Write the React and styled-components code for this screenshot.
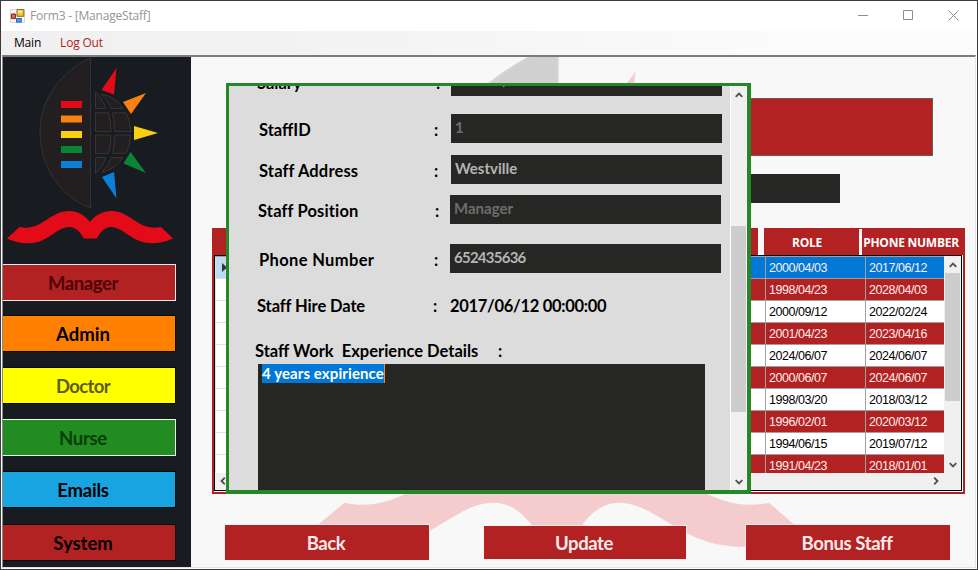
import React from "react";
import styled, { createGlobalStyle, css } from "styled-components";

const GlobalStyle = createGlobalStyle`
  * { box-sizing: border-box; }
  body { margin: 0; overflow: hidden; background: #3a3a3c; }
`;

const humanist = `Lato, "Open Sans", sans-serif`;

const Window = styled.div`
  width: 978px;
  height: 570px;
  display: flex;
  flex-direction: column;
  background: #fff;
  border: 1px solid #3a3a3c;
  font-family: ${humanist};
  overflow: hidden;
`;

const TitleBar = styled.header`
  height: 30px;
  flex: none;
  display: flex;
  align-items: center;
  padding-left: 9px;
  background: #fff;
`;

const TitleText = styled.span`
  margin-left: 5px;
  font: 12px/16px "Open Sans", sans-serif;
  letter-spacing: -0.2px;
  color: #959595;
  flex: 1;
`;

const Controls = styled.div`
  display: flex;
  gap: 35px;
  margin-right: 18px;
  margin-top: -1px;
`;

const MenuBar = styled.nav`
  height: 24px;
  flex: none;
  display: flex;
  align-items: center;
  gap: 19px;
  padding-left: 13px;
  background: linear-gradient(90deg, #f0f0f0 0%, #f3f3f3 35%, #fbfbfb 80%);
`;

const MenuItem = styled.span`
  font: 12px/16px "Open Sans", sans-serif;
  letter-spacing: -0.2px;
  color: ${(p) => p.$color || "#000"};
`;

const Body = styled.div`
  flex: 1;
  min-height: 0;
  display: flex;
  margin: 0 1px 1px;
  border: 1px solid #e3e3e3;
  border-top: 2px solid #7c7c7c;
  border-left-color: #8a8a8a;
`;

const Sidebar = styled.aside`
  width: 188px;
  flex: none;
  display: flex;
  flex-direction: column;
  background: #181b20;
`;

const SideLogo = styled.svg`
  flex: none;
  width: 188px;
  height: 207px;
`;

const SideButton = styled.button`
  flex: none;
  width: 173px;
  height: 37px;
  margin: 0 0 ${(p) => p.$gap || 15}px;
  padding: 0 12px 0 0;
  border: 1px solid ${(p) => p.$edge || "#08080a"};
  border-left: 0;
  background: ${(p) => p.$bg};
  color: ${(p) => p.$fg || "#000"};
  font: bold 18.5px/34px ${humanist};
  letter-spacing: ${(p) => p.$track || "0"};
`;

const Main = styled.main`
  position: relative;
  flex: 1;
  min-width: 0;
  display: flex;
  flex-direction: column;
  background: #f8f8f8;
  overflow: hidden;
`;

const Watermark = styled.svg`
  position: absolute;
  left: 104px;
  top: -15px;
  width: 564px;
  height: 561px;
  opacity: 0.18;
`;

const Banner = styled.div`
  position: relative;
  flex: none;
  width: 633px;
  height: 58px;
  margin: 41px 0 0 109px;
  background: #b22222;
  border: 1px solid #6b5b5b;
`;

const SearchBox = styled.div`
  position: relative;
  flex: none;
  width: 390px;
  height: 29px;
  margin: 18px 0 0 259px;
  background: #262624;
`;

const GridFrame = styled.section`
  position: relative;
  flex: none;
  display: flex;
  flex-direction: column;
  width: 753px;
  height: 266px;
  margin: 25px 0 0 21px;
`;

const HeaderRow = styled.div`
  height: 27px;
  flex: none;
  display: grid;
  grid-template-columns: 546px 6px 95px 3px 103px;
  background: #f8f8f8;
`;

const HeaderCell = styled.div`
  background: #b22222;
  color: #fff;
  text-align: center;
  padding-right: ${(p) => p.$inset || 0}px;
  font: bold 12px/29px "Open Sans", sans-serif;
  letter-spacing: -0.25px;
  white-space: nowrap;
`;

const HeaderGap = styled.div`
  border-top: ${(p) => (p.$capped ? "1px solid #b22222" : "0")};
  background: #f8f8f8;
`;

const GridBorder = styled.div`
  flex: 1;
  min-height: 0;
  border: 2px solid #b22222;
  border-top: 0;
  padding: 0 1px 1px 0;
  background: #fff;
`;

const GridBox = styled.div`
  height: 236px;
  display: flex;
  flex-direction: column;
  border: 1px solid #000;
  background: #f0f0f0;
`;

const GridTop = styled.div`
  height: 217px;
  flex: none;
  display: flex;
`;

const Rows = styled.div`
  flex: 1;
  overflow: hidden;
  border-top: 1px solid #a0a0a0;
  background: #fff;
`;

const Row = styled.div`
  height: 22px;
  display: grid;
  grid-template-columns: 30px 521px 100px 1fr;
  background: ${(p) => p.$bg};
  color: ${(p) => p.$fg};
`;

const Cell = styled.div`
  border-right: 1px solid #a0a0a0;
  border-bottom: 1px solid #a0a0a0;
  padding-left: 3px;
  font: 12.5px/23px "Liberation Sans", Arial, sans-serif;
  height: 22px;
  letter-spacing: -0.45px;
  &:last-child { border-right: 0; }
`;

const RowHead = styled.div`
  display: flex;
  align-items: center;
  padding-left: 6px;
  border-left: 1px solid #e0e0e0;
  border-bottom: 1px solid #e0e0e0;
  background: ${(p) => (p.$active ? "#bcdcf4" : "#fff")};
`;

const scrollTrack = css`
  background: #f0f0f0;
  display: flex;
  align-items: center;
`;

const GridScroll = styled.div`
  ${scrollTrack}
  flex-direction: column;
  width: 17px;
  padding: 6px 1px 5px 1px;
`;

const GridHScroll = styled.div`
  ${scrollTrack}
  flex: 1;
  justify-content: space-between;
  padding: 0 21px 1px 4px;
`;

const Thumb = styled.div`
  width: 15px;
  height: ${(p) => p.$h}px;
  margin-top: ${(p) => p.$top}px;
  margin-bottom: auto;
  background: #cdcdcd;
`;

const Actions = styled.footer`
  position: relative;
  display: flex;
  align-items: center;
  margin: 31px 0 0 34px;
`;

const ActionButton = styled.button`
  width: ${(p) => p.$w}px;
  height: ${(p) => p.$h}px;
  margin-right: ${(p) => p.$gap || 0}px;
  padding: 0 2px 0 0;
  border: 0;
  outline: 1px solid rgba(240, 240, 244, 0.8);
  background: #b22222;
  color: #faeaea;
  font: bold 18.5px/34px ${humanist};
  letter-spacing: -0.4px;
`;

const DetailPanel = styled.section`
  position: absolute;
  left: 35px;
  top: 26px;
  width: 525px;
  height: 411px;
  display: flex;
  border: 3px solid #268726;
  border-right-width: 4px;
  border-bottom-width: 4px;
  background: #dcdcdc;
  overflow: hidden;
`;

const Details = styled.div`
  flex: 1;
  height: 404px;
  overflow: hidden;
`;

const Field = styled.div`
  display: flex;
  align-items: center;
  height: 29px;
  margin: ${(p) => p.$top}px 0 0 ${(p) => p.$left}px;
`;

const fieldText = css`
  padding-top: 3px;
  font: bold 16.5px/20px ${humanist};
  letter-spacing: ${(p) => p.$track || "0"};
  white-space: pre;
  color: #000;
`;

const Label = styled.label`
  ${fieldText}
  width: ${(p) => p.$w}px;
`;

const Colon = styled.span`
  ${fieldText}
  width: ${(p) => p.$w || 16}px;
`;

const PlainValue = styled.span`
  ${fieldText}
`;

const Value = styled.div`
  width: 271px;
  height: 29px;
  padding-left: 4px;
  background: #262624;
  color: ${(p) => (p.$disabled ? "#6d6d6d" : "#b4b4b4")};
  font: bold 15px/${(p) => p.$line || 27}px ${humanist};
  letter-spacing: ${(p) => p.$track || "0"};
`;

const Notes = styled.div`
  width: 447px;
  height: 126px;
  margin-left: 29px;
  padding-left: 4px;
  background: #262624;
`;

const Selected = styled.span`
  display: block;
  width: 123px;
  height: 19px;
  background: #0078d7;
  border-right: 1px solid #ff8728;
  color: #fff;
  font: bold 15px/19px ${humanist};
  letter-spacing: 0.1px;
  white-space: nowrap;
`;

const PanelScroll = styled.div`
  ${scrollTrack}
  flex-direction: column;
  width: 17px;
  flex: none;
  padding: 6px 0 5px;
  border-left: 1px solid #fff;
  border-right: 1px solid #f8f8f8;
`;

const ChevronSvg = styled.svg`
  flex: none;
  width: 8px;
  height: 6px;
  ${(p) => p.$turn && css`transform: rotate(${p.$turn}deg);`}
`;

const Chevron = ({ turn = 0 }) => (
  <ChevronSvg viewBox="0 0 8 6" $turn={turn}>
    <path d="M0.7 4.8 L4 1.5 L7.3 4.8" fill="none" stroke="#505050" strokeWidth="1.8" />
  </ChevronSvg>
);

const Emblem = () => (
  <>
    <path d="M90.5 58 C62 70 40 99 40 132 C40 168 62 198 90.5 208 Z" fill="#231f20" stroke="#37393b" strokeWidth="0.8" />
    <g fill="#231f20" stroke="#37393b" strokeWidth="0.9">
      <path d="M95.5 92 Q102 98 106 108.5 H95.5 Z" />
      <path d="M101.5 94 Q116 97 123 108.5 H111 Q108 100 101.5 94 Z" />
      <path d="M95.5 112.8 H108.5 Q111 122 111 131.5 H95.5 Z" />
      <path d="M112.5 112.8 H126 Q130.5 121 130.7 131.5 H114.5 Q114.5 121 112.5 112.8 Z" />
      <path d="M95.5 135 H111 Q111 144 108.5 153.4 H95.5 Z" />
      <path d="M114.5 135 H130.7 Q130.5 144 126 153.4 H112.5 Q114.5 145 114.5 135 Z" />
      <path d="M95.5 157.5 H106 Q102 168 95.5 173.5 Z" />
      <path d="M111 157.5 H123 Q115 169 102 172.5 Q108 166 111 157.5 Z" />
    </g>
    <path d="M61 101 h21 v7 h-21z" fill="#e30b17" />
    <path d="M61 115.5 h21 v7 h-21z" fill="#fb8012" />
    <path d="M61 131 h21 v7 h-21z" fill="#fdd00f" />
    <path d="M61 146 h21 v7 h-21z" fill="#0a8435" />
    <path d="M61 161 h21 v7 h-21z" fill="#0b80d8" />
    <path d="M116.5 68 L101.5 90 L114 94.5 Z" fill="#e30b17" />
    <path d="M146 93 L123 102 L131 114 Z" fill="#fb8012" />
    <path d="M134 126 L158 133 L134 140 Z" fill="#fdd00f" />
    <path d="M130.5 152 L123.5 163.5 L146 173 Z" fill="#0a8435" />
    <path d="M102 177 L114 172 L116.5 198.5 Z" fill="#0b80d8" />
    <path
      d="M7 238.5 L19.5 227 C40 232 50 211 69 211 C80 211 86 217 90 222 C94 217 100 211 112 211 C130 211 140 232 161 227 L173 238.5 C161 244 148 245 137 240 C128 236 120 227 111 227 C105 227 100 232 97 238.5 L84 238.5 C80 232 76 227 69 227 C60 227 52 236 43 240 C33 245 18 244 7 238.5 Z"
      fill="#e30b17"
    />
  </>
);

const FormIcon = () => (
  <svg width="15" height="14" viewBox="0 0 15 14">
    <path d="M0.5 0.5h14v13h-14z" fill="#fafafa" stroke="#c9ccd2" strokeWidth="0.8" />
    <path d="M7 0.5h6.8v6.8h-6.8z" fill="#f2c53c" stroke="#8c6c1c" />
    <path d="M8 1.5h4v2.5h-4z" fill="#fbe48c" />
    <path d="M1.4 5h4v4.6h-4z" fill="#d86868" stroke="#8b1a1a" />
    <path d="M6.5 9.5h4.8v3.6h-4.8z" fill="#5b9be8" stroke="#2c5eaa" />
  </svg>
);

const people = [
  ["2000/04/03", "2017/06/12"],
  ["1998/04/23", "2028/04/03"],
  ["2000/09/12", "2022/02/24"],
  ["2001/04/23", "2023/04/16"],
  ["2024/06/07", "2024/06/07"],
  ["2000/06/07", "2024/06/07"],
  ["1998/03/20", "2018/03/12"],
  ["1996/02/01", "2020/03/12"],
  ["1994/06/15", "2019/07/12"],
  ["1991/04/23", "2018/01/01"],
];

const rowColor = (i) => (i === 0 ? "#0078d7" : i % 2 ? "#b22222" : "#fff");

export default function App() {
  return (
    <Window>
      <GlobalStyle />
      <TitleBar>
        <FormIcon />
        <TitleText>Form3 - [ManageStaff]</TitleText>
        <Controls>
          <svg width="10" height="10" viewBox="0 0 10 10"><path d="M0 5.5h10" stroke="#8c8c8c" /></svg>
          <svg width="10" height="10" viewBox="0 0 10 10"><path d="M0.5 0.5h9v9h-9z" fill="none" stroke="#8c8c8c" /></svg>
          <svg width="11" height="11" viewBox="0 0 11 11"><path d="M0.5 0.5l10 10M10.5 0.5l-10 10" stroke="#8c8c8c" /></svg>
        </Controls>
      </TitleBar>
      <MenuBar>
        <MenuItem>Main</MenuItem>
        <MenuItem $color="#b22222">Log Out</MenuItem>
      </MenuBar>
      <Body>
        <Sidebar>
          <SideLogo viewBox="3 57 188 207"><Emblem /></SideLogo>
          <SideButton $bg="#b22222" $fg="#4d0507" $edge="#f6eeee" $gap={14} $track="-0.4px">Manager</SideButton>
          <SideButton $bg="#ff8000">Admin</SideButton>
          <SideButton $bg="#ffff00" $fg="#5c5c08" $track="-0.6px">Doctor</SideButton>
          <SideButton $bg="#228b22" $fg="#063f08" $edge="#f0f6f0" $track="-0.3px">Nurse</SideButton>
          <SideButton $bg="#18a4e0" $gap={16} $track="-0.2px">Emails</SideButton>
          <SideButton $bg="#b22222">System</SideButton>
        </Sidebar>
        <Main>
          <Watermark viewBox="3 57 188 207" preserveAspectRatio="none"><Emblem /></Watermark>
          <Banner />
          <SearchBox />
          <GridFrame>
            <HeaderRow>
              <HeaderCell />
              <HeaderGap />
              <HeaderCell $inset={9}>ROLE</HeaderCell>
              <HeaderGap $capped />
              <HeaderCell $inset={5}>PHONE NUMBER</HeaderCell>
            </HeaderRow>
            <GridBorder>
              <GridBox>
                <GridTop>
                  <Rows>
                    {people.map(([role, phone], i) => (
                      <Row key={i} $bg={rowColor(i)} $fg={i && i % 2 === 0 ? "#000" : "#fbeeee"}>
                        <RowHead $active={i === 0}>
                          {i === 0 && (
                            <svg width="5" height="9" viewBox="0 0 5 9"><path d="M0 0l5 4.5-5 4.5z" fill="#333" /></svg>
                          )}
                        </RowHead>
                        <Cell />
                        <Cell>{role}</Cell>
                        <Cell>{phone}</Cell>
                      </Row>
                    ))}
                  </Rows>
                  <GridScroll>
                    <Chevron />
                    <Thumb $h={128} $top={5} />
                    <Chevron turn={180} />
                  </GridScroll>
                </GridTop>
                <GridHScroll>
                  <Chevron turn={-90} />
                  <Chevron turn={90} />
                </GridHScroll>
              </GridBox>
            </GridBorder>
          </GridFrame>
          <Actions>
            <ActionButton $w={204} $h={35} $gap={55}>Back</ActionButton>
            <ActionButton $w={202} $h={33} $gap={60}>Update</ActionButton>
            <ActionButton $w={204} $h={35}>Bonus Staff</ActionButton>
          </Actions>
          <DetailPanel>
            <Details>
              <Field $top={-19} $left={28}>
                <Label $w={179}>Salary</Label><Colon $w={15}>:</Colon><Value $line={25}>40 000,00</Value>
              </Field>
              <Field $top={18} $left={30}>
                <Label $w={175}>StaffID</Label><Colon $w={17}>:</Colon><Value $disabled>1</Value>
              </Field>
              <Field $top={12} $left={30}>
                <Label $w={175} $track="0.15px">Staff Address</Label><Colon $w={17}>:</Colon><Value>Westville</Value>
              </Field>
              <Field $top={11} $left={29}>
                <Label $w={177} $track="0.15px">Staff Position</Label><Colon $w={15}>:</Colon><Value $disabled>Manager</Value>
              </Field>
              <Field $top={20} $left={30}>
                <Label $w={175} $track="0.35px">Phone Number</Label><Colon>:</Colon><Value $track="-0.75px">652435636</Value>
              </Field>
              <Field $top={17} $left={28}>
                <Label $w={176} $track="-0.1px">Staff Hire Date</Label><Colon $w={17}>:</Colon><PlainValue $track="-0.3px">2017/06/12 00:00:00</PlainValue>
              </Field>
              <Field $top={16} $left={26}>
                <Label $w={243}>Staff Work  Experience Details</Label><Colon>:</Colon>
              </Field>
              <Notes><Selected>4 years expirience</Selected></Notes>
            </Details>
            <PanelScroll>
              <Chevron />
              <Thumb $h={186} $top={128} />
              <Chevron turn={180} />
            </PanelScroll>
          </DetailPanel>
        </Main>
      </Body>
    </Window>
  );
}
